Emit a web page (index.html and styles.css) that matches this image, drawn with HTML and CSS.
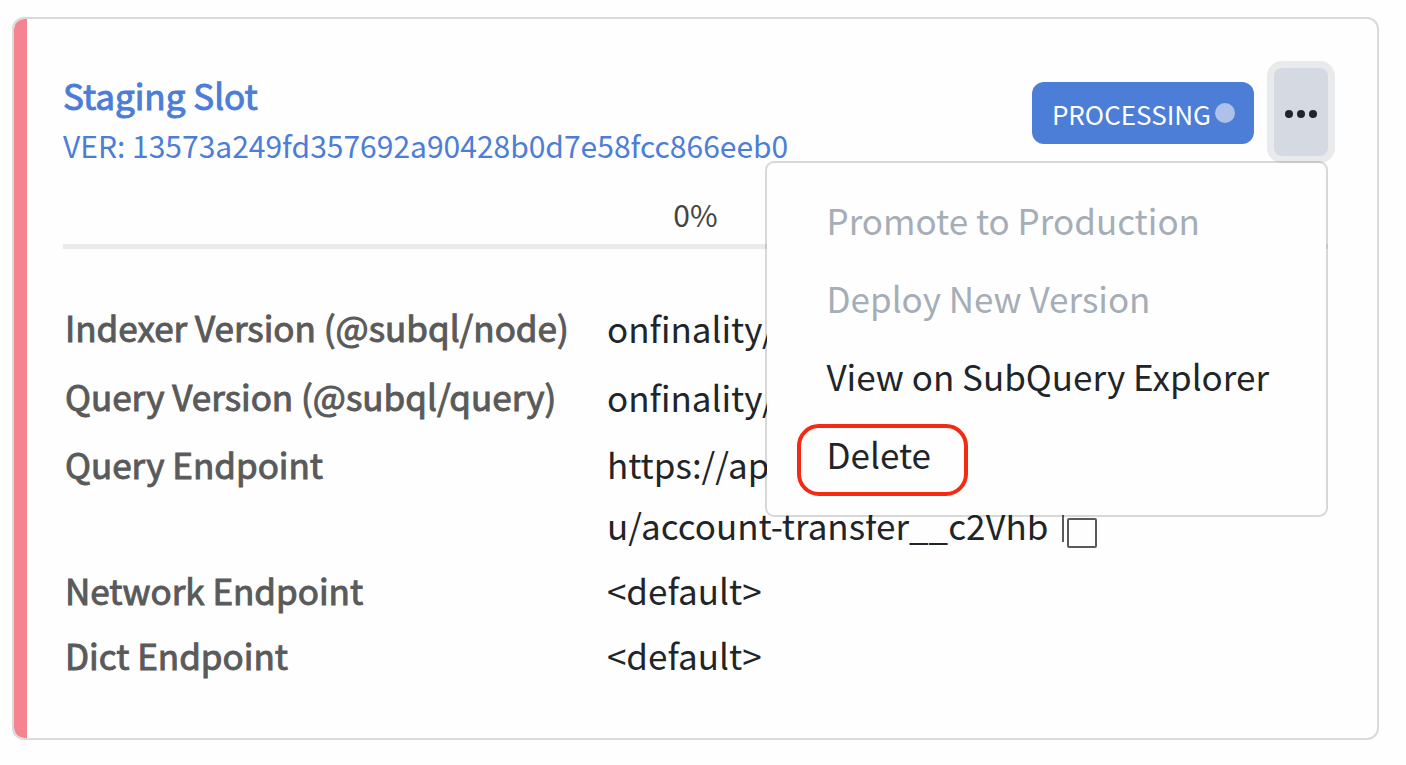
FILE: index.html
```html
<!DOCTYPE html>
<html lang="en">
<head>
<meta charset="utf-8">
<title>Staging Slot</title>
<link rel="stylesheet" href="styles.css">
</head>
<body>
<main class="card">
  <header class="head">
    <div class="slot">
      <h1 class="title">Staging Slot</h1>
      <p class="version">VER: 13573a249fd357692a90428b0d7e58fcc866eeb0</p>
    </div>
    <span class="badge">PROCESSING<span class="dot"></span></span>
    <div class="actions">
      <button class="more" type="button" aria-label="More actions" aria-expanded="true">
        <svg width="34" height="8" viewBox="0 0 34 8" fill="#212529" aria-hidden="true"><circle cx="5" cy="4" r="4"/><circle cx="17" cy="4" r="4"/><circle cx="29" cy="4" r="4"/></svg>
      </button>
      <div class="menu">
        <button class="item" type="button" disabled>Promote to Production</button>
        <button class="item" type="button" disabled>Deploy New Version</button>
        <button class="item" type="button">View on SubQuery Explorer</button>
        <button class="item marked" type="button">Delete</button>
      </div>
    </div>
  </header>
  <div class="percent">0%</div>
  <div class="track"></div>
  <table class="details">
    <tr class="image"><th scope="row">Indexer Version (@subql/node)</th><td>onfinality/</td></tr>
    <tr class="image"><th scope="row">Query Version (@subql/query)</th><td>onfinality/</td></tr>
    <tr><th scope="row">Query Endpoint</th><td>https://ap<br>u/account-transfer__c2Vhb<button class="copy" type="button" aria-label="Copy endpoint"><svg width="36" height="36" viewBox="0 0 36 36" fill="none" stroke="#5a5a5a" stroke-width="2" aria-hidden="true"><path d="M2 30V3Q2 2 3 2H29"/><rect x="7" y="7" width="28" height="28" rx="1"/></svg></button></td></tr>
    <tr><th scope="row">Network Endpoint</th><td>&lt;default&gt;</td></tr>
    <tr><th scope="row">Dict Endpoint</th><td>&lt;default&gt;</td></tr>
  </table>
</main>
</body>
</html>
```
FILE: styles.css
```css
* { box-sizing: border-box; }

body {
  margin: 0;
  padding: 17px 27px 24px 12px;
  background: #fefefe;
  color: #212529;
  font-family: "Noto Sans CJK SC", "Noto Sans", sans-serif;
  font-size: 35px;
}

button {
  border: 0;
  padding: 0;
  background: none;
  color: inherit;
  font: inherit;
}

.card {
  padding: 49px 49px 51px 37px;
  border: 2px solid #dadada;
  border-radius: 12px;
  background: linear-gradient(to right, #f68490 13px, #fefefe 13px) padding-box;
}

.head {
  display: flex;
  align-items: flex-start;
  padding-left: 12px;
}

.slot { flex: 1; padding-top: 2px; }

.title {
  margin: 0;
  color: #4c7dd7;
  font-size: 35px;
  font-weight: 400;
  line-height: 50px;
  -webkit-text-stroke: 1px currentColor;
}

.version {
  margin: 0;
  color: #4c7dd7;
  font-size: 30px;
  line-height: 50px;
}

.badge {
  display: flex;
  align-items: center;
  gap: 4px;
  height: 62px;
  margin-top: 14px;
  padding: 0 19px 0 20px;
  border-radius: 12px;
  background: #4c7dd7;
  color: #fff;
  font-size: 26px;
}

.dot {
  width: 20px;
  height: 20px;
  border-radius: 50%;
  background: #adc1eb;
}

.actions { position: relative; margin-left: 20px; }

.more {
  display: flex;
  align-items: center;
  justify-content: center;
  width: 54px;
  height: 88px;
  padding-top: 4px;
  border-radius: 8px;
  background: #d5dae2;
  box-shadow: 0 0 0 7px #e8eaeb;
}

.menu {
  position: absolute;
  top: 93px;
  right: 0;
  padding: 17px 57px 23px 59px;
  border: 2px solid rgba(0, 0, 0, 0.15);
  border-radius: 9px;
  background: #fefefe padding-box;
}

.item {
  display: block;
  position: relative;
  height: 78px;
  text-align: left;
  white-space: nowrap;
}

.item:disabled { color: #a5adb7; }

.marked::before {
  content: "";
  position: absolute;
  inset: 10px -37px -4px -29px;
  border: 4px solid #f42a12;
  border-radius: 22px;
}

.percent {
  margin: 19px 0 0 12px;
  color: #444;
  font-size: 30px;
  line-height: 50px;
  text-align: center;
}

.track {
  height: 5px;
  margin: 5px 0 44px 12px;
  background: #eaeaea;
}

.details {
  width: 100%;
  padding-left: 12px;
  border-collapse: separate;
  border-spacing: 0;
  line-height: 61px;
}

.details th,
.details td {
  padding: 2px 0;
  text-align: left;
  vertical-align: top;
}

.details th {
  width: 43%;
  padding-left: 2px;
  color: #5a5a5a;
  font-weight: 400;
  -webkit-text-stroke: 1px currentColor;
}

.details .image td { padding-block: 4px; }
.details .image th { padding-block: 3px; }

.copy {
  margin-left: 13px;
  line-height: 0;
  vertical-align: -8px;
}
```
